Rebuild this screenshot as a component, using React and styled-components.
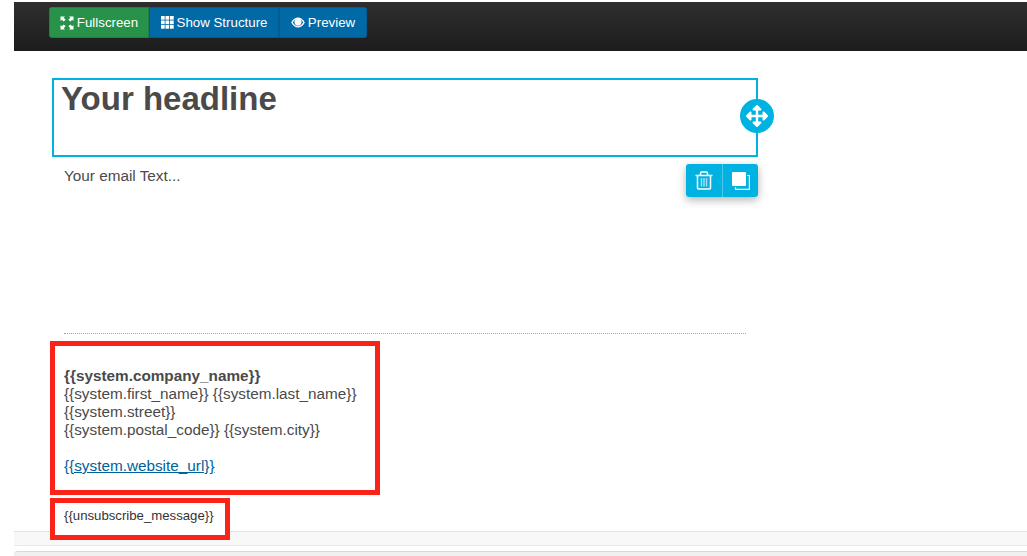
import React from "react";
import styled, { createGlobalStyle } from "styled-components";
import { FaArrowsAlt } from "react-icons/fa";

const GlobalStyle = createGlobalStyle`
  html, body {
    margin: 0;
    padding: 0;
    background: #fff;
    overflow: hidden;
  }
  body {
    font-family: "Liberation Sans", Arial, sans-serif;
    font-size: 15.3px;
    line-height: 18px;
    color: #4a4a4a;
  }
`;

const Page = styled.div`
  height: 556px;
  overflow: hidden;
  padding-top: 2px;
  padding-left: 14px;
  box-sizing: border-box;
`;

const Toolbar = styled.div`
  height: 49px;
  box-sizing: border-box;
  padding: 5px 0 0 35px;
  background: linear-gradient(to bottom, #2f2f2f 0%, #1c1c1c 100%);
  display: flex;
  align-items: flex-start;
`;

const ToolGroup = styled.div`
  display: flex;
  border-radius: 4px;
  overflow: hidden;
`;

const ToolButton = styled.div`
  height: 31px;
  width: ${(p) => p.$width}px;
  box-sizing: border-box;
  display: flex;
  align-items: center;
  justify-content: center;
  gap: 3px;
  color: #fff;
  font-size: 13.3px;
  background: ${(p) => (p.$green ? "#28924a" : "#0069a6")};
  border: 1px solid ${(p) => (p.$green ? "#237f40" : "#005c92")};
  svg {
    flex: none;
  }
`;

const Content = styled.div`
  position: relative;
  padding-top: 27px;
`;

const HeadlineBox = styled.div`
  position: relative;
  margin-left: 38px;
  width: 706px;
  height: 79px;
  box-sizing: border-box;
  border: 2px solid #00b2e2;
  padding: 1px 7px 0;
`;

const Headline = styled.h1`
  margin: 0;
  font-size: 33px;
  line-height: 36px;
  font-weight: bold;
  color: #4a4a4a;
`;

const MoveHandle = styled.div`
  position: absolute;
  right: -18px;
  top: 19px;
  width: 34px;
  height: 34px;
  border-radius: 50%;
  background: #00b2e2;
  color: #fff;
  display: flex;
  align-items: center;
  justify-content: center;
`;

const TextBlock = styled.div`
  position: relative;
  margin-left: 50px;
  width: 682px;
  height: 177px;
  padding-top: 10px;
  box-sizing: border-box;
  border-bottom: 1px dotted #a0a0a0;
`;

const BlockActions = styled.div`
  position: absolute;
  right: -12px;
  top: 7px;
  display: flex;
  border-radius: 3px;
  overflow: hidden;
  box-shadow: 0 3px 8px rgba(0, 0, 0, 0.3);
`;

const ActionButton = styled.div`
  width: 36px;
  height: 33px;
  box-sizing: border-box;
  background: #00b2e2;
  display: flex;
  align-items: center;
  justify-content: center;
  & + & {
    border-left: 1px solid #4cc9ea;
  }
`;

const Footer = styled.div`
  position: relative;
  margin-left: 50px;
  padding-top: 33px;
`;

const Strong = styled.div`
  font-weight: bold;
`;

const Line = styled.div`
  min-height: 18px;
`;

const WebLink = styled.a`
  color: #00629b;
  text-decoration: underline;
`;

const Unsubscribe = styled.div`
  position: relative;
  z-index: 1;
  margin-top: 32px;
  font-size: 13.2px;
  color: #333;
  line-height: 18px;
`;

const RedFrame = styled.div`
  position: absolute;
  left: -14px;
  top: ${(p) => p.$top}px;
  width: ${(p) => p.$width}px;
  height: ${(p) => p.$height}px;
  box-sizing: border-box;
  border: 5px solid #fb2317;
  background: ${(p) => (p.$filled ? "#fff" : "transparent")};
`;

const StatusBar = styled.div`
  position: absolute;
  left: 0;
  right: 0;
  top: 480px;
  height: 15px;
  box-sizing: border-box;
  background: #f8f8f8;
  border-top: 1px solid #e2e2e2;
  border-bottom: 1px solid #e8e8e8;
`;

const LowerPanel = styled.div`
  position: absolute;
  left: 0;
  right: 0;
  top: 500px;
  height: 20px;
  background: #f0f0f0;
  border-top: 1px solid #d8d8d8;
  border-top-left-radius: 4px;
`;

const ExpandIcon = () => (
  <svg width="14" height="14" viewBox="0 0 14 14" fill="#fff">
    <path d="M0.500 0.500h4.500L3.700 1.800 5.600 3.700 3.700 5.600 1.800 3.700 0.500 5z" />
    <path d="M13.500 0.500V5l-1.300-1.300-1.900 1.900-1.900-1.900 1.900-1.900L9 0.500z" />
    <path d="M0.500 13.500V9l1.300 1.300 1.900-1.900 1.900 1.900-1.900 1.900L5 13.500z" />
    <path d="M13.500 13.500H9l1.300-1.300-1.900-1.900 1.900-1.900 1.900 1.900L13.500 9z" />
  </svg>
);

const GridIcon = () => (
  <svg width="13" height="13" viewBox="0 0 13 13" fill="#fff">
    {[0, 4.500, 9].map((y) =>
      [0, 4.500, 9].map((x) => <rect key={`${x}-${y}`} x={x} y={y} width="3.700" height="3.700" />)
    )}
  </svg>
);

const EyeIcon = () => (
  <svg width="14" height="11" viewBox="0 0 14 11">
    <path d="M0.200 5.500C2 2 4.500 0.500 7 0.500s5 1.500 6.800 5C12 9 9.500 10.500 7 10.500S2 9 0.200 5.500z" fill="#fff" />
    <path d="M1.800 5.500C3.200 3.200 4.300 2.400 5 2.100a3.600 3.600 0 1 0 4 0c.7.300 1.800 1.100 3.200 3.400C10.800 7.800 9 9.200 7 9.200S3.200 7.800 1.800 5.500z" fill="#0069a6" />
    <circle cx="7" cy="5" r="2.600" fill="#fff" />
  </svg>
);

const TrashIcon = () => (
  <svg width="18" height="19" viewBox="0 0 18 19" fill="none" stroke="#fff" strokeWidth="1.500">
    <path d="M0.500 4.500h17" />
    <path d="M5.500 4.500V2a1 1 0 0 1 1-1h5a1 1 0 0 1 1 1v2.500" />
    <path d="M2.500 4.500V17a1 1 0 0 0 1 1h11a1 1 0 0 0 1-1V4.500" />
    <path d="M6.500 7v8.500M9 7v8.500M11.500 7v8.500" strokeOpacity="0.600" />
  </svg>
);

const DuplicateIcon = () => (
  <svg width="18" height="18" viewBox="0 0 18 18">
    <rect x="0" y="0" width="14" height="14" rx="1" fill="#fff" />
    <path d="M15.200 3.500h2.200v13.900H3.500v-2.200" fill="none" stroke="#fff" strokeWidth="1.200" />
  </svg>
);

export default function App() {
  return (
    <Page>
      <GlobalStyle />
      <Toolbar>
        <ToolGroup>
          <ToolButton $green $width={100}>
            <ExpandIcon />
            Fullscreen
          </ToolButton>
          <ToolButton $width={130}>
            <GridIcon />
            Show Structure
          </ToolButton>
          <ToolButton $width={88}>
            <EyeIcon />
            Preview
          </ToolButton>
        </ToolGroup>
      </Toolbar>
      <Content>
        <HeadlineBox>
          <Headline>Your headline</Headline>
          <MoveHandle>
            <FaArrowsAlt size={22} />
          </MoveHandle>
        </HeadlineBox>
        <TextBlock>
          Your email Text...
          <BlockActions>
            <ActionButton>
              <TrashIcon />
            </ActionButton>
            <ActionButton>
              <DuplicateIcon />
            </ActionButton>
          </BlockActions>
        </TextBlock>
        <StatusBar />
        <LowerPanel />
        <Footer>
          <RedFrame $top={7} $width={330} $height={154} />
          <RedFrame $top={164} $width={180} $height={42} $filled />
          <Strong>{"{{system.company_name}}"}</Strong>
          <Line>{"{{system.first_name}} {{system.last_name}}"}</Line>
          <Line>{"{{system.street}}"}</Line>
          <Line>{"{{system.postal_code}} {{system.city}}"}</Line>
          <Line />
          <Line>
            <WebLink>{"{{system.website_url}}"}</WebLink>
          </Line>
          <Unsubscribe>{"{{unsubscribe_message}}"}</Unsubscribe>
        </Footer>
      </Content>
    </Page>
  );
}
